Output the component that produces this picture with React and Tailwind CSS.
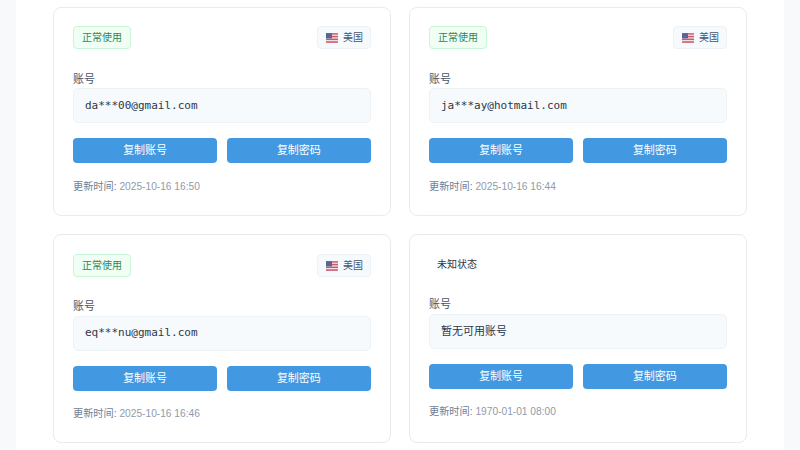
import React from 'react';

const accounts = [
  { id: 1, status: 'ok', email: 'da***00@gmail.com', time: '2025-10-16 16:50' },
  { id: 2, status: 'ok', email: 'ja***ay@hotmail.com', time: '2025-10-16 16:44' },
  { id: 3, status: 'ok', email: 'eq***nu@gmail.com', time: '2025-10-16 16:46' },
  { id: 4, status: 'unknown', email: '暂无可用账号', time: '1970-01-01 08:00' },
];

const font = 'font-["Liberation_Sans","Noto_Sans_CJK_SC",sans-serif]';

function UsFlag() {
  return (
    <svg width="12" height="10" viewBox="0 0 12 10" className="block">
      <rect width="12" height="10" rx="1.5" fill="#f0dfe2" />
      <rect y="0.2" width="12" height="1.4" fill="#c75a6b" />
      <rect y="2.9" width="12" height="1.4" fill="#c75a6b" />
      <rect y="5.6" width="12" height="1.4" fill="#c75a6b" />
      <rect y="8.3" width="12" height="1.5" fill="#c75a6b" />
      <rect y="0.2" width="6" height="5.2" fill="#5a6396" />
    </svg>
  );
}

function AccountCard({ account, firstRow }) {
  const known = account.status === 'ok';
  return (
    <div className={`rounded-[8px] border border-[#e8ecf0] bg-white px-[19px] ${firstRow ? 'pt-[18px] pb-[20px]' : 'pt-[19px] pb-[20px]'}`}>
      <div className={`flex ${known ? 'h-[23px]' : 'h-[21px]'} items-center justify-between`}>
        {known ? (
          <span className="flex h-[23px] w-[58px] items-center justify-center rounded-[4px] border border-[#c6f6d5] bg-[#f0fff4] text-[10px] text-[#2f855a]">
            正常使用
          </span>
        ) : (
          <span className="pl-[8px] text-[10px] text-[#2d3748]">未知状态</span>
        )}
        {known && (
          <span className="flex h-[23px] w-[54px] items-center justify-center gap-[5px] rounded-[4px] border border-[#edf2f7] bg-[#f7fafc] pl-[1px] text-[10px] text-[#4a5568]">
            <UsFlag />
            美国
          </span>
        )}
      </div>
      <div className={`${firstRow ? 'mt-[24px]' : 'mt-[23px]'} text-[11px] leading-[13px] text-[#4a5568]`}>账号</div>
      <div
        className={`${firstRow ? 'mt-[2px] pt-[2px]' : 'mt-[3px]'} flex h-[35px] items-center rounded-[5px] border border-[#edf2f7] bg-[#f7fafc] px-[11px] text-[11px] text-[#2d3748] ${known ? 'font-["DejaVu_Sans_Mono",monospace]' : ''}`}
      >
        {account.email}
      </div>
      <div className="mt-[15px] grid grid-cols-2 gap-[9.5px]">
        <button className="h-[25px] rounded-[4px] bg-[#4299e1] text-[11px] text-white">复制账号</button>
        <button className="h-[25px] rounded-[4px] bg-[#4299e1] text-[11px] text-white">复制密码</button>
      </div>
      <div className={`${firstRow ? 'mt-[16px]' : 'mt-[15px]'} text-[10.2px] leading-[16px] text-[#718096]`}>
        更新时间: <span className="text-[#8f9bab]">{account.time}</span>
      </div>
    </div>
  );
}

export default function App() {
  return (
    <div className={`h-[450px] overflow-hidden bg-[#f8f9fa] px-[16px] ${font}`}>
      <div className="h-full bg-white px-[37px] pt-[7px]">
        <div className="grid grid-cols-2 gap-x-[18px] gap-y-[18px]">
          {accounts.map((account, i) => (
            <AccountCard key={account.id} account={account} firstRow={i < 2} />
          ))}
        </div>
      </div>
    </div>
  );
}
